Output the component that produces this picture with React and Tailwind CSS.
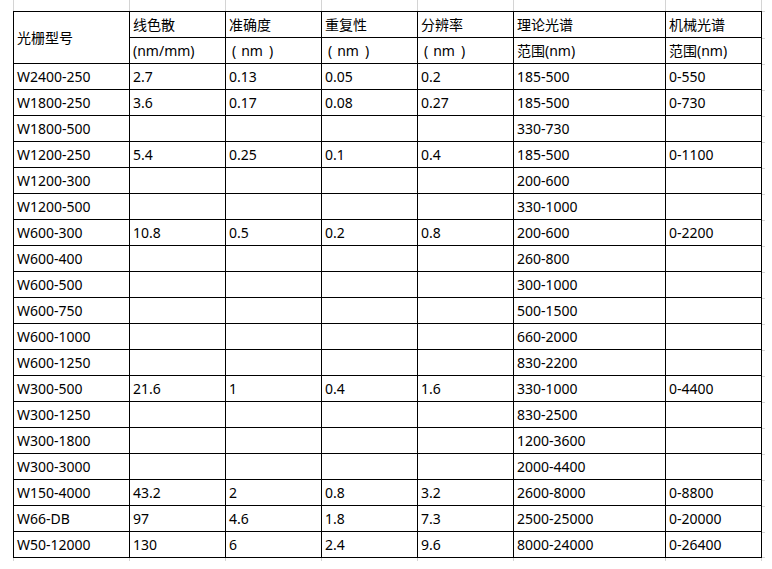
import React from "react";

const cols = "grid-cols-[117px_96px_96px_96px_96px_152px_96px]";

const rows = [
  ["W2400-250", "2.7", "0.13", "0.05", "0.2", "185-500", "0-550"],
  ["W1800-250", "3.6", "0.17", "0.08", "0.27", "185-500", "0-730"],
  ["W1800-500", "", "", "", "", "330-730", ""],
  ["W1200-250", "5.4", "0.25", "0.1", "0.4", "185-500", "0-1100"],
  ["W1200-300", "", "", "", "", "200-600", ""],
  ["W1200-500", "", "", "", "", "330-1000", ""],
  ["W600-300", "10.8", "0.5", "0.2", "0.8", "200-600", "0-2200"],
  ["W600-400", "", "", "", "", "260-800", ""],
  ["W600-500", "", "", "", "", "300-1000", ""],
  ["W600-750", "", "", "", "", "500-1500", ""],
  ["W600-1000", "", "", "", "", "660-2000", ""],
  ["W600-1250", "", "", "", "", "830-2200", ""],
  ["W300-500", "21.6", "1", "0.4", "1.6", "330-1000", "0-4400"],
  ["W300-1250", "", "", "", "", "830-2500", ""],
  ["W300-1800", "", "", "", "", "1200-3600", ""],
  ["W300-3000", "", "", "", "", "2000-4400", ""],
  ["W150-4000", "43.2", "2", "0.8", "3.2", "2600-8000", "0-8800"],
  ["W66-DB", "97", "4.6", "1.8", "7.3", "2500-25000", "0-20000"],
  ["W50-12000", "130", "6", "2.4", "9.6", "8000-24000", "0-26400"],
];

// the "（nm）" unit, spaced out like the wide brackets in the original
const Nm = () => (
  <>
    <span className="ml-[3px]">(</span>
    <span className="ml-[5px]">nm</span>
    <span className="ml-[6px]">)</span>
  </>
);

const headTop = ["线色散", "准确度", "重复性", "分辨率", "理论光谱", "机械光谱"];
const headBottom = ["(nm/mm)", <Nm />, <Nm />, <Nm />, "范围(nm)", "范围(nm)"];

// plain cell: right + bottom border, first column also gets the left border
const Cell = ({ children, first, top }) => (
  <div
    className={`flex items-center pl-[3px] border-r border-b border-black whitespace-nowrap ${
      first ? "border-l" : ""
    } ${top ? "border-t" : ""}`}
  >
    {children}
  </div>
);

// faint spreadsheet gridlines poking out past the table edges
const GridStub = ({ h }) => (
  <div className={`grid ${cols} ${h}`}>
    {Array.from({ length: 7 }).map((_, i) => (
      <div
        key={i}
        className={`border-r border-[#d4d4d4] ${i === 0 ? "border-l" : ""}`}
      />
    ))}
  </div>
);

export default function App() {
  return (
    <div
      className="w-[772px] h-[569px] bg-white text-black text-[14px] leading-none"
      style={{ fontFamily: '"Noto Sans", "Noto Sans CJK SC", sans-serif' }}
    >
      <div className="pl-[13px]">
        <GridStub h="h-[11px]" />

        <div className="flex">
          <div className={`grid ${cols} grid-rows-[27px_repeat(20,26px)]`}>
            <div className="row-span-2 flex items-center pl-[3px] border border-black">
              光栅型号
            </div>
            {headTop.map((t, i) => (
              <Cell key={"t" + i} top>
                {t}
              </Cell>
            ))}
            {headBottom.map((t, i) => (
              <Cell key={"b" + i}>{t}</Cell>
            ))}
            {rows.map((r, ri) =>
              r.map((v, ci) => (
                <Cell key={ri + "-" + ci} first={ci === 0}>
                  {v}
                </Cell>
              ))
            )}
          </div>

          <div className="grid grid-rows-[27px_repeat(20,26px)] w-[3px]">
            {Array.from({ length: 21 }).map((_, i) => (
              <div
                key={i}
                className={`border-t border-[#d4d4d4] ${i === 20 ? "border-b" : ""}`}
              />
            ))}
          </div>
        </div>

        <GridStub h="h-[3px]" />
      </div>
    </div>
  );
}
